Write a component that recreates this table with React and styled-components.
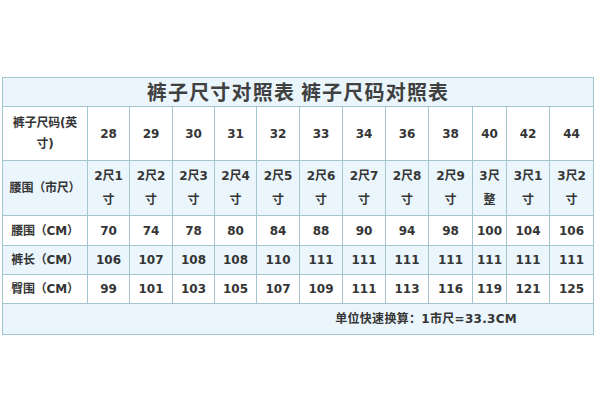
import React from "react";
import styled, { createGlobalStyle } from "styled-components";

const Global = createGlobalStyle`
  html, body { margin: 0; padding: 0; background: #ffffff; }
  body { font-family: "DejaVu Sans", "Noto Sans CJK SC", sans-serif; }
`;

const Page = styled.div`
  width: 600px;
  height: 400px;
  padding: 77px 0 0 2px;
  box-sizing: border-box;
  background: #ffffff;
`;

const Table = styled.table`
  width: 592px;
  border-collapse: collapse;
  table-layout: fixed;
  border: 1px solid #a3c5cf;
  color: #353535;
  font-family: "DejaVu Sans", "Noto Sans CJK SC", sans-serif;
  font-weight: bold;
  font-size: 12px;
`;

const Row = styled.tr`
  height: ${(p) => p.$h}px;
  background: ${(p) => (p.$tint ? "#eaf6fc" : "#ffffff")};
`;

const Cell = styled.td`
  border: 1px solid #a3c5cf;
  padding: 0;
  text-align: center;
  vertical-align: middle;
  line-height: ${(p) => p.$lh || 16}px;
  white-space: nowrap;
  overflow: hidden;
`;

const LabelCell = styled(Cell)`
  font-size: 12px;
  letter-spacing: -0.2px;
`;

const TitleCell = styled(Cell)`
  font-family: "Noto Sans CJK SC", sans-serif;
  font-size: 20px;
  font-weight: bold;
  color: #404040;
  letter-spacing: 1.2px;
`;

const FooterCell = styled(Cell)`
  text-align: right;
  padding-right: 76px;
  font-size: 12px;
  letter-spacing: 0.3px;
`;

const widths = [85, 42, 43, 42, 42, 43, 43, 43, 43, 44, 34, 43, 44];

const sizes = [28, 29, 30, 31, 32, 33, 34, 36, 38, 40, 42, 44];
const shichi = [
  ["2尺1", "寸"], ["2尺2", "寸"], ["2尺3", "寸"], ["2尺4", "寸"], ["2尺5", "寸"],
  ["2尺6", "寸"], ["2尺7", "寸"], ["2尺8", "寸"], ["2尺9", "寸"], ["3尺", "整"],
  ["3尺1", "寸"], ["3尺2", "寸"],
];
const waist = [70, 74, 78, 80, 84, 88, 90, 94, 98, 100, 104, 106];
const length = [106, 107, 108, 108, 110, 111, 111, 111, 111, 111, 111, 111];
const hip = [99, 101, 103, 105, 107, 109, 111, 113, 116, 119, 121, 125];

export default function App() {
  return (
    <Page>
      <Global />
      <Table>
        <colgroup>
          {widths.map((w, i) => (
            <col key={i} style={{ width: w }} />
          ))}
        </colgroup>
        <tbody>
          <Row $h={29} $tint>
            <TitleCell colSpan={13}>裤子尺寸对照表 裤子尺码对照表</TitleCell>
          </Row>
          <Row $h={54}>
            <LabelCell $lh={21}>
              裤子尺码(英
              <br />
              寸)
            </LabelCell>
            {sizes.map((s) => (
              <Cell key={s}>{s}</Cell>
            ))}
          </Row>
          <Row $h={55} $tint>
            <LabelCell>腰围（市尺）</LabelCell>
            {shichi.map(([a, b], i) => (
              <Cell key={i} $lh={24}>
                {a}
                <br />
                {b}
              </Cell>
            ))}
          </Row>
          <Row $h={30}>
            <LabelCell>腰围（CM）</LabelCell>
            {waist.map((v, i) => (
              <Cell key={i}>{v}</Cell>
            ))}
          </Row>
          <Row $h={29} $tint>
            <LabelCell>裤长（CM）</LabelCell>
            {length.map((v, i) => (
              <Cell key={i}>{v}</Cell>
            ))}
          </Row>
          <Row $h={29}>
            <LabelCell>臀围（CM）</LabelCell>
            {hip.map((v, i) => (
              <Cell key={i}>{v}</Cell>
            ))}
          </Row>
          <Row $h={31} $tint>
            <FooterCell colSpan={13}>单位快速换算：1市尺=33.3CM</FooterCell>
          </Row>
        </tbody>
      </Table>
    </Page>
  );
}
